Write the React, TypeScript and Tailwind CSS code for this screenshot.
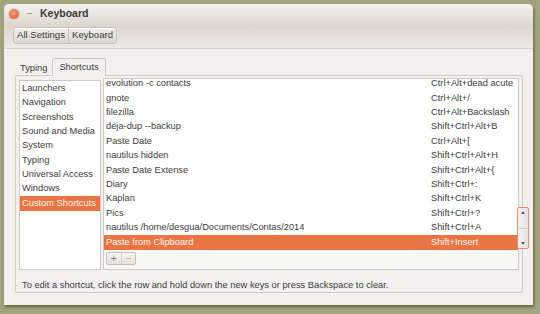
import React from "react";

const categories = [
  "Launchers",
  "Navigation",
  "Screenshots",
  "Sound and Media",
  "System",
  "Typing",
  "Universal Access",
  "Windows",
  "Custom Shortcuts",
];

const shortcuts: [string, string][] = [
  ["evolution -c contacts", "Ctrl+Alt+dead acute"],
  ["gnote", "Ctrl+Alt+/"],
  ["filezilla", "Ctrl+Alt+Backslash"],
  ["deja-dup --backup", "Shift+Ctrl+Alt+B"],
  ["Paste Date", "Ctrl+Alt+["],
  ["nautilus hidden", "Shift+Ctrl+Alt+H"],
  ["Paste Date Extense", "Shift+Ctrl+Alt+{"],
  ["Diary", "Shift+Ctrl+:"],
  ["Kaplan", "Shift+Ctrl+K"],
  ["Pics", "Shift+Ctrl+?"],
  ["nautilus /home/desgua/Documents/Contas/2014", "Shift+Ctrl+A"],
  ["Paste from Clipboard", "Shift+Insert"],
];

export default function App() {
  return (
    <div
      className="w-[540px] h-[314px] bg-[#a3a47f] pt-[4px] pl-[4px] overflow-hidden text-[9.3px] text-[#3c3c3c]"
      style={{ fontFamily: '"Liberation Sans", Arial, sans-serif' }}
    >
      <div className="relative w-[529px] h-[301px] bg-[#f2f1f0] rounded-t-[5px] shadow-[1px_2px_3px_rgba(40,40,20,0.55)] flex flex-col">
        {/* header */}
        <div className="h-[45px] rounded-t-[5px] border-b border-[#d6d2ca] bg-gradient-to-b from-[#f4f3f1] via-[#dcd6cd] to-[#ece9e5] flex flex-col">
          <div className="h-[19px] flex items-center pl-[5px]">
            <div className="w-[10px] h-[10px] rounded-full bg-[radial-gradient(circle_at_40%_35%,#f79c7a,#e0562e)] shadow-[0_0_1px_#a33]" />
            <span className="ml-[8px] text-[#7d7a75] text-[9px]">–</span>
            <span className="ml-[8px] font-bold text-[10.5px] text-[#3c3c3c]">Keyboard</span>
          </div>
          <div className="pl-[9px] mt-[4px]">
            <div className="inline-flex h-[17px] rounded-[3px] border border-[#c7c2b9] bg-gradient-to-b from-[#f2f0ed] to-[#dcd7cf] shadow-[inset_0_1px_0_#fff] text-[9.6px]">
              <div className="px-[3px] flex items-center border-r border-[#c7c2b9]">All Settings</div>
              <div className="px-[3px] flex items-center text-[#3c3c3c]">Keyboard</div>
            </div>
          </div>
        </div>

        {/* tabs */}
        <div className="flex items-end ml-[11px] mt-[9px] h-[18px] relative z-10">
          <div className="px-[5px] h-[15px] flex items-center">Typing</div>
          <div className="px-[6px] h-[18px] flex items-center bg-[#f2f1f0] border border-b-0 border-[#cfcbc4] rounded-t-[3px]">Shortcuts</div>
        </div>

        {/* notebook */}
        <div className="ml-[11px] w-[508px] h-[218px] -mt-px border border-[#cfcbc4] rounded-[2px] flex flex-col px-[3px] pt-[2px]">
          <div className="flex gap-[2px] h-[192px]">
            <div className="w-[82px] mt-[2px] h-[190px] bg-white border border-[#cfcbc4] pt-[1px]">
              {categories.map((c, i) => (
                <div
                  key={c}
                  className={
                    i === 8
                      ? "h-[14.3px] flex items-center px-[2px] bg-[#ea7443] text-[#fff6f0]"
                      : "h-[14.3px] flex items-center px-[2px]"
                  }
                >
                  {c}
                </div>
              ))}
            </div>
            <div className="relative w-[416px] h-[192px] border border-[#cfcbc4] flex flex-col bg-[#f7f7f6]">
              <div className="h-[171px] bg-white overflow-hidden">
                <div className="-mt-[2px]">
                  {shortcuts.map(([name, key], i) => (
                    <div
                      key={name}
                      className={
                        i === 11
                          ? "h-[14.4px] flex items-center px-[2px] bg-[#ea7443] text-[#fff6f0]"
                          : "h-[14.4px] flex items-center px-[2px]"
                      }
                    >
                      <span className="w-[325px] whitespace-nowrap">{name}</span>
                      <span className="whitespace-nowrap">{key}</span>
                    </div>
                  ))}
                </div>
              </div>
              <div className="pl-[2px] pt-[2px]">
                <div className="inline-flex h-[13px] w-[30px] rounded-[2px] border border-[#c4c0b8] bg-gradient-to-b from-[#f8f7f5] to-[#e4e0da] text-[11px] leading-none text-[#8a8680]">
                  <div className="w-[15px] flex items-center justify-center border-r border-[#d2cec7]">+</div>
                  <div className="w-[14px] flex items-center justify-center text-[#b0aca6]">−</div>
                </div>
              </div>
              {/* overlay scrollbar */}
              <div className="absolute right-[-11px] top-[128px] w-[12px] h-[42px] rounded-[2px] border border-[#e0946d] bg-gradient-to-r from-[#f4f3f1] to-[#e6e3df] flex flex-col items-center justify-between py-[3px]">
                <div className="w-0 h-0 border-l-[2.5px] border-r-[2.5px] border-b-[3px] border-l-transparent border-r-transparent border-b-[#6a6864]" />
                <div className="w-[8px] h-px bg-[#cfcbc5]" />
                <div className="w-0 h-0 border-l-[2.5px] border-r-[2.5px] border-t-[3px] border-l-transparent border-r-transparent border-t-[#6a6864]" />
              </div>
            </div>
          </div>
          <div className="pl-[3px] mt-[9px]">
            To edit a shortcut, click the row and hold down the new keys or press Backspace to clear.
          </div>
        </div>
      </div>
    </div>
  );
}
